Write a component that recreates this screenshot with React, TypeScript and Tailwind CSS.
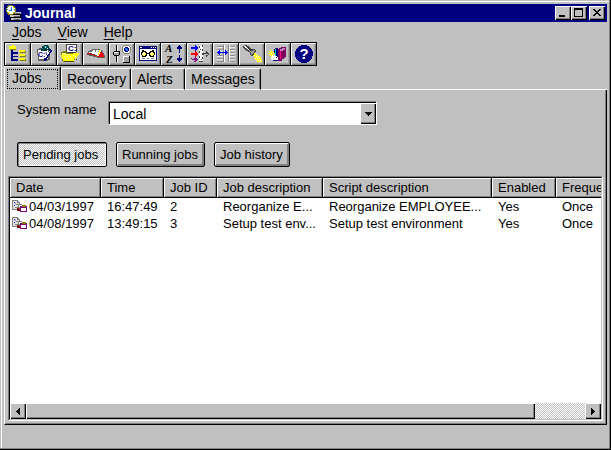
import React from 'react'
import clsx from 'clsx'

interface IIconProps {
  children: React.ReactNode
}

const ToolIcon: React.FC<IIconProps> = ({ children }) => (
  <svg
    width="22"
    height="20"
    viewBox="0 0 22 20"
    shapeRendering="crispEdges"
    className="shrink-0 overflow-visible"
    aria-hidden="true"
  >
    {children}
  </svg>
)

const raised =
  'bg-[#c0c0c0] shadow-[inset_1px_1px_0_#fff,inset_-1px_-1px_0_#808080,inset_-2px_-2px_0_#a0a0a0]'

const tools = [
  {
    name: 'Job tree',
    icon: (
      <ToolIcon>
        <path d="M2 2h3V1h2v1h2v3H2zM12 6h6v2h-6zM12 10h6v2h-6zM12 14h6v2h-6z" fill="#ffff00" />
        <path d="M3 5h6v1H3zM13 8h6v1h-6zM13 12h6v1h-6zM13 16h6v1h-6zM18 7h1v1h-1zM18 11h1v1h-1zM18 15h1v1h-1z" fill="#808000" />
        <path d="M4 6h2v2h5v2H6v2h5v1H6v2h5v2H4z" fill="#000080" />
      </ToolIcon>
    ),
  },
  {
    name: 'Edit script',
    icon: (
      <ToolIcon>
        <path d="M4 5h2V4h11v12h-2v1H5z" fill="#606060" />
        <path d="M5 6h10v9H6z" fill="#fff" />
        <path d="M8 4h1V2h2V1h4v1h1v2h1v2h-3v1H8z" fill="#004040" />
        <path d="M11 2h3v1h-3zM9 4h1v1H9z" fill="#00a0a0" />
        <path d="M12 3h1v1h-1zM14 4h1v1h-1z" fill="#fff" />
        <text x="5" y="13" fontSize="7" fontWeight="bold" fill="#000080" fontFamily="Liberation Sans, sans-serif">C:\</text>
        <path d="M17 5h1v1h1v2h-1v1h-1v2h-1v1h-1v2h-1v2h-1v1h-2v-3h1v-2h1v-1h1V9h1V8h1V6h1z" fill="#000080" />
        <path d="M16 7h1v1h-1v2h-1v1h-1v2h-1v1h-1v-2h1v-1h1V9h1V8h1z" fill="#fff" />
      </ToolIcon>
    ),
  },
  {
    name: 'Open script',
    icon: (
      <ToolIcon>
        <path d="M2 8h2V7h4v1h8v2h3v2h-1v2h-2v2h-2v1h-1v1H4v-1H3v-4H2z" fill="#808000" />
        <path d="M3 9h4v1h9v1h-3v1H4z" fill="#ffff80" />
        <path d="M7 0h11v8h-1v1H8V8H7z" fill="#404040" />
        <path d="M8 1h9v7H8z" fill="#fff" />
        <text x="9" y="7" fontSize="8" fontWeight="bold" fill="#000080" fontFamily="Liberation Sans, sans-serif">C:</text>
        <path d="M2 11h9v-1h3V9h6v2h-1v1h-1v2h-2v1h-1v2H4v-2H3v-2H2z" fill="#ffff00" />
        <path d="M5 12h1v1H5zM8 12h1v1H8zM11 12h1v1h-1zM14 11h1v1h-1zM6 14h1v1H6zM9 14h1v1H9zM12 14h1v1h-1zM16 12h1v1h-1z" fill="#fff" />
        <path d="M5 17h10v1H5zM17 15h1v1h-1z" fill="#404000" />
      </ToolIcon>
    ),
  },
  {
    name: 'Performance',
    icon: (
      <ToolIcon>
        <path d="M2 9h1V7h2V6h2V5h8v1h2v1h1v2h1v2h1v3h-8v-1H8v-1H4v-1H2z" fill="#606060" />
        <path d="M3 9h1V8h2V7h2V6h6v1h2v1h1v2h1v2h-6v-1h-2v-1H7V9H3z" fill="#fff" />
        <path d="M6 7h1v1H6zM10 6h1v2h-1zM13 7h1v1h-1z" fill="#808080" />
        <path d="M14 6h2v1h-1v2h-1v2h-1V9h1z" fill="#ffff00" />
        <path d="M15 8h2v1h1v2h1v2h-7v-1h2v-2h1z" fill="#ff0000" />
        <path d="M2 9h4v1h3v1h2v1H9v-1H5v-1H2z" fill="#c00000" />
      </ToolIcon>
    ),
  },
  {
    name: 'Settings',
    icon: (
      <ToolIcon>
        <path d="M5 1h1v17H5z" fill="#000" />
        <path d="M6 1h1v17H6z" fill="#fff" />
        <path d="M3 7h6v4H8v1H3v-1H2V8h1z" fill="#000" />
        <path d="M3 8h5v3H3z" fill="#a0a0a0" />
        <path d="M3 8h4v1H3z" fill="#fff" />
        <path d="M13 1h5v1h1v1h1v5h-1v1h-1v1h-5V9h-1V8h-1V3h1V2h1z" fill="#808080" />
        <path d="M13 2h5v1h1v5h-1v1h-5V8h-1V3h1z" fill="#fff" />
        <path d="M14 3h3v1h1v3h-1v1h-3V7h-1V4h1z" fill="#000080" />
        <path d="M14 4h2v1h1v2h-2V6h-1z" fill="#0080ff" />
        <path d="M12 12h7v7h-7z" fill="#000" />
        <path d="M12 12h6v6h-6z" fill="#fff" />
        <path d="M13 13h5v5h-5z" fill="#a0a0a0" />
      </ToolIcon>
    ),
  },
  {
    name: 'Watch',
    icon: (
      <ToolIcon>
        <path d="M2 2h18v15H2z" fill="#000080" />
        <path d="M3 5h16v11H3zM3 3h2v1H3zM14 3h1v1h-1zM16 3h1v1h-1zM18 3h1v1h-1z" fill="#fff" />
        <path d="M5 6h2v1h2v1h1v1h2V8h1V7h2V6h2v2h1v3h-1v2h-4v-1h-1v-2h-2v2H9v1H5v-2H4V8h1z" fill="#000" />
        <path d="M6 8h2v1h1v2H8v1H6v-1H5V9h1zM14 8h2v1h1v2h-1v1h-2v-1h-1V9h1z" fill="#ffff60" />
        <path d="M6 9h1v1H6zM14 9h1v1h-1z" fill="#fff" />
        <path d="M5 14h3v1H5zM10 14h2v1h-2zM14 14h3v1h-3z" fill="#808080" />
      </ToolIcon>
    ),
  },
  {
    name: 'Sort',
    icon: (
      <ToolIcon>
        <g fontFamily="Liberation Serif, serif" fontStyle="italic" fontWeight="bold" fontSize="11" fill="#000">
          <text x="2" y="8">A</text>
          <text x="3" y="19">Z</text>
        </g>
        <path d="M16 1h1v1h1v1h1v2h-2v4h-1V5h-2V3h1V2h1zM16 11h1v3h2v2h-1v1h-1v1h-1v-1h-1v-1h-1v-2h2z" fill="#000080" />
      </ToolIcon>
    ),
  },
  {
    name: 'Filter',
    icon: (
      <ToolIcon>
        <path d="M10 1h4v17h-4z" fill="#fff" />
        <path d="M10 2h1v2h-1zM13 1h1v2h-1zM10 7h1v2h-1zM13 5h1v2h-1zM10 12h1v2h-1zM13 9h1v2h-1zM13 13h1v2h-1zM10 17h4v1h-4zM11 5h1v1h-1zM12 15h1v1h-1z" fill="#404040" />
        <path d="M2 3h4V1h1v1h1v1h1v2H8v1H7v1H6V5H2z" fill="#0000ff" />
        <path d="M2 9h4V7h1v1h1v1h1v2H8v1H7v1H6v-2H2z" fill="#ff0000" />
        <path d="M2 14h1v1H2zM3 15h2v1H3zM5 14h1v-1h1v1h1v1h1v1H8v1H7v1H5v-1h1v-1H5z" fill="#800080" />
        <path d="M14 9h3V7h1v1h1v1h1v2h-1v1h-1v1h-1v-2h-3z" fill="#404040" />
        <path d="M15 10h4v1h-4z" fill="#c0c0c0" />
      </ToolIcon>
    ),
  },
  {
    name: 'Column width',
    icon: (
      <ToolIcon>
        <path d="M2 2h6v1H2zM2 5h6v1H2zM2 11h6v1H2zM2 14h6v1H2zM2 17h6v1H2zM15 2h5v1h-5zM15 5h5v1h-5zM15 8h5v1h-5zM15 11h5v1h-5zM15 14h5v1h-5zM15 17h5v1h-5z" fill="#909090" />
        <path d="M2 3h6v1H2zM2 6h6v1H2zM2 12h6v1H2zM2 15h6v1H2zM15 3h5v1h-5zM15 6h5v1h-5zM15 9h5v1h-5zM15 12h5v1h-5zM15 15h5v1h-5z" fill="#e8e8e8" />
        <path d="M8 1h1v17H8zM13 1h1v17h-1z" fill="#808080" />
        <path d="M9 1h1v17H9zM14 1h1v17h-1z" fill="#fff" />
        <path d="M2 8h1V7h1V6h1v2h5V6h1v1h1v1h1v1h-1v1h-1v1h-1V9H5v2H4v-1H3V9H2z" fill="#0000ff" />
      </ToolIcon>
    ),
  },
  {
    name: 'Find',
    icon: (
      <ToolIcon>
        <path d="M2 2h2V1h2v1h2v1h1v1h1v1h4v1h1v2h-1v2h-1v1h-1v1h-2v-1H9V8H7V7H5V6H4V5H3V4H2z" fill="#404040" />
        <path d="M3 3h1v1h1v1h1v1h2v1h1v1h1V7H9V6H8V5H7V4H6V3H5V2H3z" fill="#a0a0a0" />
        <path d="M4 2h1v1h1v1h1v1h1v1H7V5H6V4H4z" fill="#fff" />
        <path d="M10 7h2V6h2v1h-1v2h-1v1h-1v1h-1z" fill="#a0a0a0" />
        <path d="M13 9h2v1h1v1h1v1h2v1h1v2h1v3h-5v-1h-1v-1h-1v-2h-1v-2h-1v-1h1z" fill="#ffff00" />
        <path d="M13 11h1v1h-1zM15 10h1v1h-1zM15 12h1v1h-1zM17 12h1v1h-1zM14 14h1v1h-1zM16 14h1v1h-1zM18 14h1v1h-1zM17 16h1v1h-1zM19 16h1v1h-1zM15 16h1v1h-1zM18 18h1v1h-1z" fill="#fff" />
      </ToolIcon>
    ),
  },
  {
    name: 'Jobs wizard',
    icon: (
      <ToolIcon>
        <path d="M11 5h1V4h2V3h5v10h-1v1h-1v1h-2v2h-4z" fill="#800060" />
        <path d="M13 5h2V4h3v2h-2v1h-3z" fill="#c080c0" />
        <path d="M13 7h1v8h-1z" fill="#ff0080" />
        <path d="M7 5h1V4h3v11H8z" fill="#000080" />
        <path d="M8 5h1v7H8z" fill="#00c0c0" />
        <path d="M4 11h4v1h2v1h1v4H7v-1H5v-1H4z" fill="#fff" />
        <path d="M6 16h5v1H6zM9 13h1v1H9z" fill="#000080" />
        <path d="M4 6h1v2h1V7h1v1H6v1h2v1H6v1h1v1H6v-1H5v2H4v-2H3v1H2v-1h1v-1H1V9h2V8H2V7h1v1h1z" fill="#ffff00" />
        <path d="M4 9h1v1H4z" fill="#fff" />
      </ToolIcon>
    ),
  },
  {
    name: 'Help',
    icon: (
      <ToolIcon>
        <circle cx="11" cy="10" r="9" fill="#000080" />
        <text x="11" y="15" textAnchor="middle" fontSize="15" fontWeight="bold" fill="#fff" fontFamily="Liberation Sans, sans-serif">?</text>
      </ToolIcon>
    ),
  },
]

const JobIcon: React.FC = () => (
  <svg width="16" height="13" viewBox="0 0 16 13" shapeRendering="crispEdges" aria-hidden="true">
    <path d="M0 0h6v1h1v1h1v8H0z" fill="#808080" />
    <path d="M1 1h4v2h2v6H1z" fill="#e0e0e0" />
    <path d="M2 2h1v1H2zM2 5h1v1H2z" fill="#0000ff" />
    <path d="M3 3h1v1H3zM4 4h2v1H4zM3 7h3v1H3z" fill="#808080" />
    <path d="M6 4h4v1h1v6H6z" fill="#808080" />
    <path d="M7 5h3v2H7z" fill="#fff" />
    <path d="M5 8h2v1h1v2H5z" fill="#800000" />
    <path d="M8 6h7v6H8z" fill="#800080" />
    <path d="M10 5h4v2h-4z" fill="#808000" />
    <path d="M9 8h5v3H9z" fill="#fff" />
  </svg>
)

const AppIcon: React.FC = () => (
  <svg width="16" height="16" viewBox="0 0 16 16" shapeRendering="crispEdges" aria-hidden="true">
    <path d="M4 7h11v9H4z" fill="#000" />
    <path d="M5 7h10v2H5zM4 10h10v2H4zM5 13h10v2H5z" fill="#c0c0c0" />
    <path d="M8 8h6v1H8zM8 11h6v1H8zM8 14h6v1H8z" fill="#606060" />
    <path d="M2 0h5v1h2v2h1v4H9v2H7v1H2V9H1V7H0V3h1V1h1z" fill="#808000" />
    <path d="M3 1h4v1h1v1h1v4H8v1H7v1H3V8H2V7H1V3h1V2h1z" fill="#fff" />
    <path d="M5 2h1v4H3V5h2zM1 4h1v1H1zM8 4h1v1H8z" fill="#0080ff" />
    <path d="M7 2h1v1H7zM2 7h2v1H2zM7 7h1v1H7z" fill="#ffff00" />
  </svg>
)

const windowButton = clsx(
  'flex h-[14px] w-4 items-center justify-center bg-[#c0c0c0]',
  'shadow-[inset_1px_1px_0_#fff,inset_-1px_-1px_0_#000,inset_-2px_-2px_0_#808080]',
)

const TitleBar: React.FC = () => (
  <header className="flex h-[18px] shrink-0 items-center bg-[#000080] px-0.5 text-white">
    <AppIcon />
    <h1 className="ml-[3px] flex-1 text-sm leading-[18px] font-bold">Journal</h1>
    <button type="button" aria-label="Minimize" className={windowButton}>
      <svg width="12" height="10" shapeRendering="crispEdges">
        <path d="M2 7h6v2H2z" />
      </svg>
    </button>
    <button type="button" aria-label="Maximize" className={windowButton}>
      <svg width="12" height="10" shapeRendering="crispEdges">
        <path d="M1 0h9v9H1zM2 2v6h7V2z" fillRule="evenodd" />
      </svg>
    </button>
    <button type="button" aria-label="Close" className={clsx(windowButton, 'ml-0.5')}>
      <svg width="12" height="10" shapeRendering="crispEdges">
        <path d="M2 1h2v1h1v1h2V2h1V1h2v1H9v1H8v1H7v1h1v1h1v1h1v1H8V7H7V6H5v1H4v1H2V7h1V6h1V5h1V4H4V3H3V2H2z" />
      </svg>
    </button>
  </header>
)

const menus = ['Jobs', 'View', 'Help']

const tabs = [
  { name: 'Jobs', width: 'w-[57px]' },
  { name: 'Recovery', width: 'w-[70px]' },
  { name: 'Alerts', width: 'w-[54px]' },
  { name: 'Messages', width: 'w-[76px]' },
]

const views = [
  { name: 'Pending jobs', width: 'w-[90px]' },
  { name: 'Running jobs', width: 'w-[89px]' },
  { name: 'Job history', width: 'w-[76px]' },
]

const columns = [
  { title: 'Date', width: 'w-[91px]' },
  { title: 'Time', width: 'w-[63px]' },
  { title: 'Job ID', width: 'w-[53px]' },
  { title: 'Job description', width: 'w-[106px]' },
  { title: 'Script description', width: 'w-[169px]' },
  { title: 'Enabled', width: 'w-[64px]' },
  { title: 'Frequency', width: 'w-[90px]' },
]

const jobs = [
  {
    id: '2',
    date: '04/03/1997',
    time: '16:47:49',
    job: 'Reorganize E...',
    script: 'Reorganize EMPLOYEE...',
    enabled: 'Yes',
    frequency: 'Once',
  },
  {
    id: '3',
    date: '04/08/1997',
    time: '13:49:15',
    job: 'Setup test env...',
    script: 'Setup test environment',
    enabled: 'Yes',
    frequency: 'Once',
  },
]

const JobsTable: React.FC = () => (
  <table className="w-[636px] table-fixed border-collapse text-left text-[13px] whitespace-nowrap">
    <thead>
      <tr className="h-5">
        {columns.map((column) => (
          <th key={column.title} className={clsx('p-0 font-normal', column.width)}>
            <div className="h-5 border-r border-b border-black bg-[#c0c0c0] pl-1.5 leading-5 shadow-[inset_1px_1px_0_#fff,inset_-1px_-1px_0_#808080]">
              {column.title}
            </div>
          </th>
        ))}
      </tr>
    </thead>
    <tbody>
      {jobs.map((job) => (
        <tr key={job.id} className="h-[17px] leading-[17px]">
          <td className="p-0">
            <div className="flex items-center gap-px pl-0.5">
              <JobIcon />
              {job.date}
            </div>
          </td>
          <td className="p-0 pl-1.5">{job.time}</td>
          <td className="p-0 pl-1.5">{job.id}</td>
          <td className="p-0 pl-1.5">{job.job}</td>
          <td className="p-0 pl-1.5">{job.script}</td>
          <td className="p-0 pl-1.5">{job.enabled}</td>
          <td className="p-0 pl-1.5">{job.frequency}</td>
        </tr>
      ))}
    </tbody>
  </table>
)

const scrollPart =
  'flex h-4 items-center justify-center bg-[#c0c0c0] shadow-[inset_1px_1px_0_#fff,inset_-1px_-1px_0_#000,inset_-2px_-2px_0_#808080]'

const ScrollBar: React.FC = () => (
  <div className="flex h-4 shrink-0 bg-[repeating-conic-gradient(#fff_0_25%,#c0c0c0_0_50%)] bg-[length:2px_2px]">
    <button type="button" aria-label="Scroll left" className={clsx(scrollPart, 'w-4')}>
      <svg width="4" height="7" shapeRendering="crispEdges">
        <path d="M3 0h1v7H3V6H2V5H1V4H0V3h1V2h1V1h1z" />
      </svg>
    </button>
    <div className="flex-1">
      <div className={clsx(scrollPart, 'w-[91%]')} />
    </div>
    <button type="button" aria-label="Scroll right" className={clsx(scrollPart, 'w-4')}>
      <svg width="4" height="7" shapeRendering="crispEdges">
        <path d="M0 0h1v1h1v1h1v1h1v1H3v1H2v1H1v1H0z" />
      </svg>
    </button>
  </div>
)

const App: React.FC = () => {
  const [tab, setTab] = React.useState('Jobs')
  const [view, setView] = React.useState('Pending jobs')

  return (
    <div className="flex h-screen flex-col overflow-hidden bg-[#c0c0c0] p-1 pb-[25px] font-['Liberation_Sans',Arial,sans-serif] text-black shadow-[inset_-1px_-1px_0_#000,inset_-2px_-2px_0_#808080,inset_1px_1px_0_#c0c0c0,inset_2px_2px_0_#fff]">
      <TitleBar />
      <nav className="flex h-5 shrink-0 items-center gap-4 pl-2 text-sm">
        {menus.map((menu) => (
          <button key={menu} type="button" className="leading-5">
            <span className="underline underline-offset-2">{menu[0]}</span>
            {menu.slice(1)}
          </button>
        ))}
      </nav>
      <div className="flex h-6 w-fit shrink-0 gap-px bg-black p-px">
        {tools.map((tool) => (
          <button
            key={tool.name}
            type="button"
            aria-label={tool.name}
            className={clsx('flex h-[22px] w-[25px] items-center justify-center', raised)}
          >
            {tool.icon}
          </button>
        ))}
      </div>
      <div role="tablist" className="flex h-6 shrink-0 items-end text-sm">
        {tabs.map(({ name, width }) => (
          <button
            key={name}
            type="button"
            role="tab"
            aria-selected={tab === name}
            onClick={() => setTab(name)}
            className={clsx(
              'rounded-t-xs border-t border-r border-l border-t-white border-r-black border-l-white text-left shadow-[inset_-1px_0_0_#808080]',
              width,
              tab === name ? 'h-6 p-0.5' : 'h-[22px] border-b border-b-white pl-[5px]',
            )}
          >
            {tab === name ? (
              <span className="block h-5 border border-dotted border-black pl-1 leading-4">{name}</span>
            ) : (
              name
            )}
          </button>
        ))}
        <div className="h-px flex-1 bg-white" />
      </div>
      <main className="flex min-h-0 flex-1 flex-col border-r border-b border-l border-r-black border-b-black border-l-white p-[3px] pt-[11px] shadow-[inset_-1px_-1px_0_#808080]">
        <div className="flex h-6 items-start pl-[9px]">
          <label htmlFor="system" className="w-[91px] text-[13px] leading-[18px]">
            System name
          </label>
          <div className="relative w-[269px] border border-t-[#808080] border-r-white border-b-white border-l-[#808080]">
            <select
              id="system"
              className="block h-[22px] w-full appearance-none border-t border-l border-black bg-white pl-[3px] text-sm"
            >
              <option>Local</option>
            </select>
            <span className={clsx(scrollPart, 'pointer-events-none absolute top-px right-0 h-[21px] w-4')}>
              <svg width="7" height="4" shapeRendering="crispEdges">
                <path d="M0 0h7v1H6v1H5v1H4v1H3V3H2V2H1V1H0z" />
              </svg>
            </span>
          </div>
        </div>
        <div className="mt-[17px] flex gap-[9px] pl-[9px] text-[13px]">
          {views.map(({ name, width }) => (
            <button
              key={name}
              type="button"
              aria-pressed={view === name}
              onClick={() => setView(name)}
              className={clsx(
                'h-[25px] rounded-xs border border-black pl-[5px] text-left',
                width,
                view === name
                  ? 'bg-[repeating-conic-gradient(#fff_0_25%,#c0c0c0_0_50%)] bg-[length:2px_2px] shadow-[inset_1px_1px_0_#808080,inset_-1px_-1px_0_#fff]'
                  : 'bg-[#c0c0c0] shadow-[inset_1px_1px_0_#fff,inset_-1px_-1px_0_#808080,inset_-2px_-2px_0_#808080]',
              )}
            >
              {name}
            </button>
          ))}
        </div>
        <div className="mt-[9px] flex min-h-0 flex-1 flex-col border border-t-[#808080] border-r-white border-b-white border-l-[#808080]">
          <div className="flex min-h-0 flex-1 flex-col border border-t-black border-r-[#c0c0c0] border-b-[#c0c0c0] border-l-black bg-white">
            <div className="min-h-0 flex-1 overflow-hidden">
              <JobsTable />
            </div>
            <ScrollBar />
          </div>
        </div>
      </main>
    </div>
  )
}

export default App
